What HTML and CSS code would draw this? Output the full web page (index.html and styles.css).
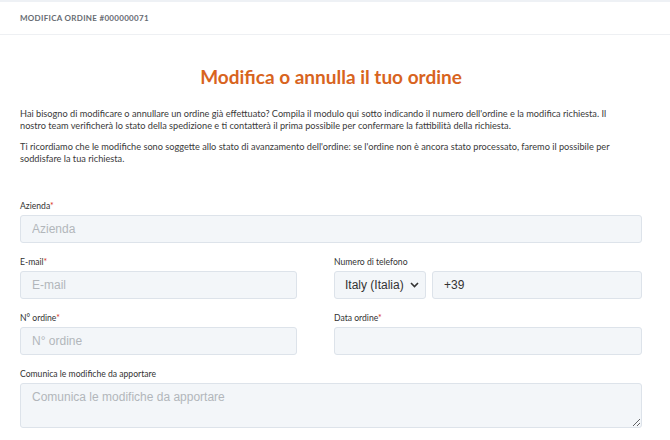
FILE: index.html
```html
<!DOCTYPE html>
<html>

<head>
  <title>Modifica ordine</title>
  <link rel="stylesheet" href="styles.css">
</head>

<body>
  <div class='topStrip'></div>
  <div class='pageHeader'>Modifica ordine #000000071</div>

  <div class='content'>
    <h1 class='title'>Modifica o annulla il tuo ordine</h1>

    <p class='intro'>
      Hai bisogno di modificare o annullare un ordine già effettuato? Compila il modulo qui sotto indicando il numero dell'ordine e la modifica richiesta. Il<br>
      nostro team verificherà lo stato della spedizione e ti contatterà il prima possibile per confermare la fattibilità della richiesta.
    </p>
    <p class='intro'>
      Ti ricordiamo che le modifiche sono soggette allo stato di avanzamento dell'ordine: se l'ordine non è ancora stato processato, faremo il possibile per<br>
      soddisfare la tua richiesta.
    </p>

    <form class='orderForm'>
      <div class='field full'>
        <label>Azienda<span class='req'>*</span></label>
        <input type='text' placeholder='Azienda' />
      </div>

      <div class='field'>
        <label>E-mail<span class='req'>*</span></label>
        <input type='text' placeholder='E-mail' />
      </div>

      <div class='field'>
        <label>Numero di telefono</label>
        <div class='phoneRow'>
          <div class='countrySelect'>
            <span>Italy (Italia)</span>
            <svg width='9' height='6' viewBox='0 0 9 6'><path d='M1 1 L4.5 4.5 L8 1' fill='none' stroke='#333' stroke-width='1.6' /></svg>
          </div>
          <input type='text' class='phoneInput' value='+39' />
        </div>
      </div>

      <div class='field'>
        <label>N° ordine<span class='req'>*</span></label>
        <input type='text' placeholder='N° ordine' />
      </div>

      <div class='field'>
        <label>Data ordine<span class='req'>*</span></label>
        <input type='text' />
      </div>

      <div class='field full'>
        <label>Comunica le modifiche da apportare</label>
        <textarea placeholder='Comunica le modifiche da apportare'></textarea>
      </div>
    </form>
  </div>
</body>

</html>
```

FILE: styles.css
```css
body {
  margin: 0;
  background: #ffffff;
  font-family: Lato, "Liberation Sans", sans-serif;
  color: #333333;
}

.topStrip {
  height: 2px;
  background: #eef1f5;
}

.pageHeader {
  height: 32px;
  line-height: 32px;
  padding-left: 20px;
  border-bottom: 1px solid #eef0f3;
  font-size: 8px;
  font-weight: bold;
  letter-spacing: 0.3px;
  text-transform: uppercase;
  color: #676b72;
}

.content {
  padding: 0 28px 0 20px;
}

.title {
  margin: 30px 0 20px 0;
  text-align: center;
  font-size: 19px;
  font-weight: bold;
  color: #d8641e;
}

.intro {
  margin: 0 0 9px 0;
  font-size: 9.2px;
  line-height: 12px;
  white-space: nowrap;
  color: #3a3a3a;
}

.orderForm {
  margin-top: 36px;
  display: grid;
  grid-template-columns: 277px 1fr;
  column-gap: 37px;
  row-gap: 14px;
}

.field.full {
  grid-column: 1 / span 2;
}

.field label {
  display: block;
  height: 14px;
  font-size: 8.6px;
  color: #333333;
}

.req {
  color: #d8341e;
}

.field input,
.field textarea,
.countrySelect {
  box-sizing: border-box;
  width: 100%;
  height: 28px;
  padding: 0 11px;
  background: #f3f6f9;
  border: 1px solid #dde3ea;
  border-radius: 3px;
  font: 12px "Liberation Sans", Arial, sans-serif;
  color: #333333;
}

.field input::placeholder,
.field textarea::placeholder {
  color: #b2b6bb;
}

.field textarea {
  height: 45px;
  padding-top: 6px;
  resize: vertical;
  display: block;
}

.phoneRow {
  display: flex;
  gap: 6px;
}

.countrySelect {
  width: 92px;
  flex: none;
  display: flex;
  align-items: center;
  justify-content: space-between;
  padding: 0 6px 0 10px;
}
```
